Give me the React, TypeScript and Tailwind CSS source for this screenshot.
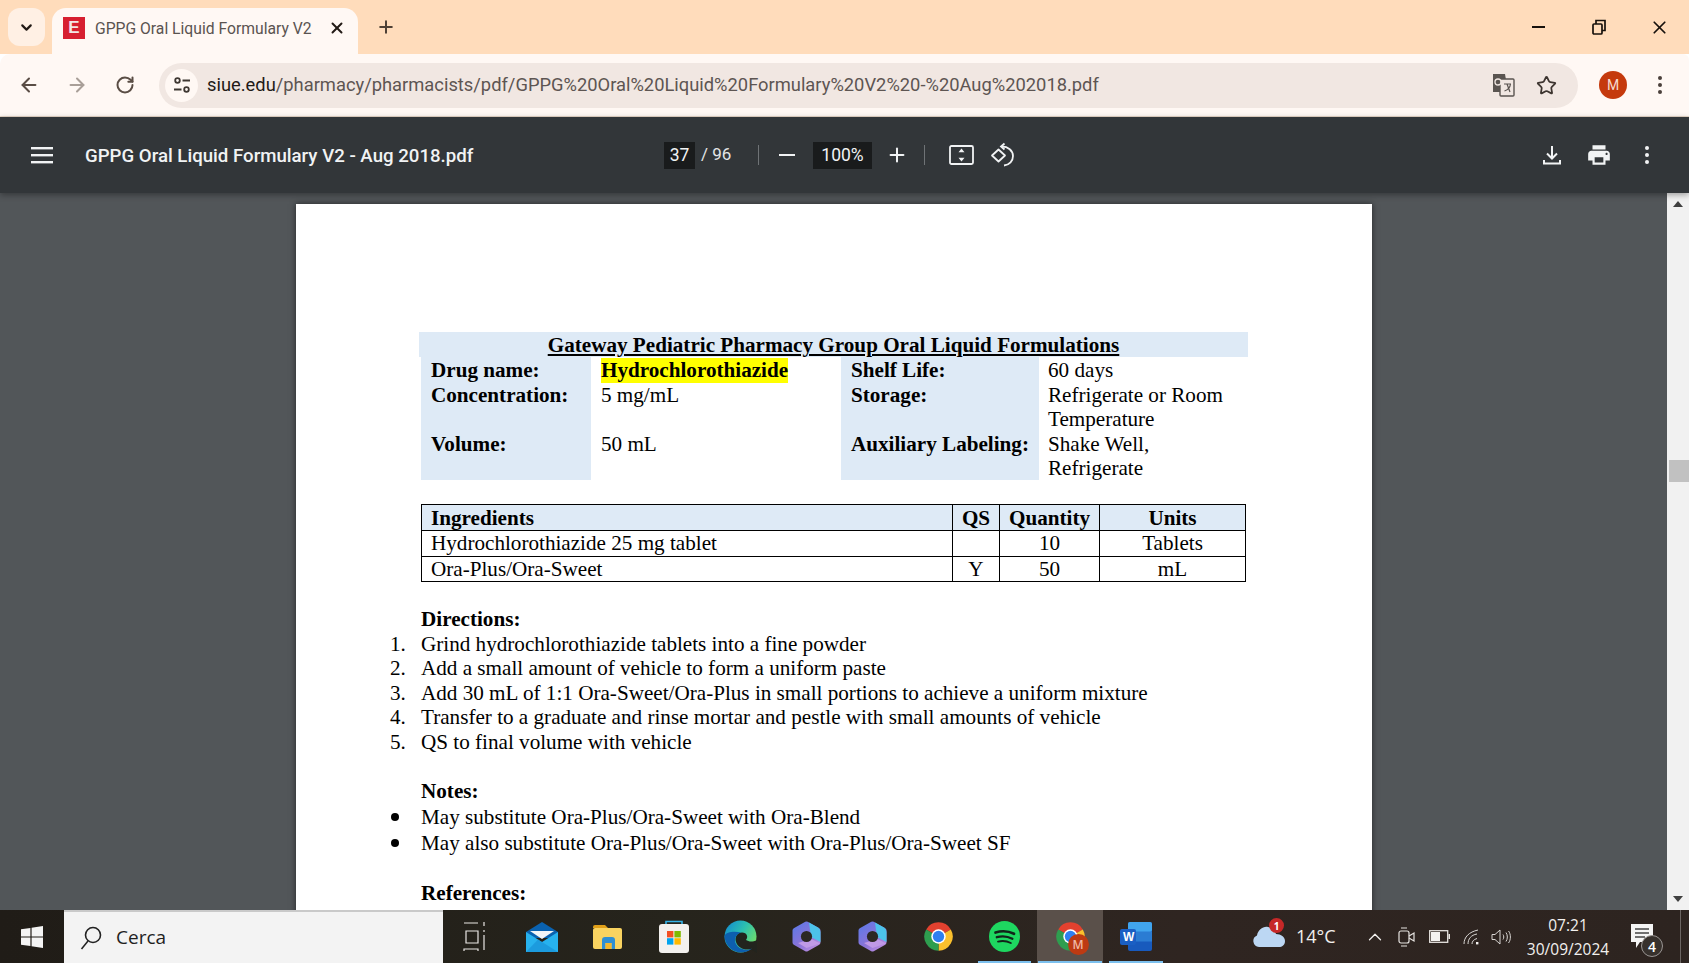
import React from "react";
import { ArrowLeft, ArrowRight, ChevronDown, ChevronUp, Plus, RotateCw, Star, X } from "lucide-react";

function Dots({ color, size = 4 }: { color: string; size?: number }) {
  return (
    <svg width={size + 2} height="24" viewBox="0 0 6 24" fill={color}>
      <circle cx="3" cy="5" r="2" />
      <circle cx="3" cy="12" r="2" />
      <circle cx="3" cy="19" r="2" />
    </svg>
  );
}

function ChromeLogo({ size = 31 }: { size?: number }) {
  return (
    <svg width={size} height={size} viewBox="0 0 24 24">
      <path d="M12 12L2.47 6.5A11 11 0 0 1 21.53 6.5Z" fill="#e2412f" />
      <path d="M12 12L21.53 6.5A11 11 0 0 1 12 23Z" fill="#fbc02d" />
      <path d="M12 12L12 23A11 11 0 0 1 2.47 6.5Z" fill="#2e9e4f" />
      <circle cx="12" cy="12" r="5.6" fill="#fff" />
      <circle cx="12" cy="12" r="4.4" fill="#2f7ff0" />
    </svg>
  );
}

function MailIcon() {
  return (
    <svg width="32" height="30" viewBox="0 0 32 30">
      <path d="M0 10L16 0L32 10V16H0Z" fill="#0a62b0" />
      <path d="M4 9H28L16 17Z" fill="#f3f6f8" />
      <path d="M0 10L16 20L32 10V30H0Z" fill="#27b2ee" />
      <path d="M12 17.5L32 30H0Z" fill="#1a93d8" opacity="0.75" />
    </svg>
  );
}

function FolderIcon() {
  return (
    <svg width="30" height="24" viewBox="0 0 30 24">
      <path d="M0 2A2 2 0 0 1 2 0H12L15 3H0Z" fill="#e09f18" />
      <rect x="0" y="3" width="29" height="21" rx="2" fill="#f9d360" />
      <path d="M9 24V15A3 3 0 0 1 12 12H19A3 3 0 0 1 22 15V24H18.5V18H12.5V24Z" fill="#2e8fd3" />
      <rect x="12.5" y="18" width="6" height="6" fill="#f4b72c" />
    </svg>
  );
}

function StoreIcon() {
  return (
    <svg width="32" height="33" viewBox="0 0 32 33">
      <path d="M8 5V1.5H24V5" fill="none" stroke="#35b3e8" strokeWidth="1.6" />
      <rect x="1" y="4" width="30" height="29" rx="3" fill="#f3f1ee" />
      <rect x="9" y="11" width="6.4" height="6.4" fill="#f25022" />
      <rect x="16.4" y="11" width="6.4" height="6.4" fill="#7fba00" />
      <rect x="9" y="18.2" width="6.4" height="6.4" fill="#00a4ef" />
      <rect x="16.4" y="18.2" width="6.4" height="6.4" fill="#ffb900" />
    </svg>
  );
}

function EdgeIcon() {
  return (
    <svg width="33" height="33" viewBox="0 0 33 33">
      <defs>
        <linearGradient id="edgeTop" x1="0" y1="0" x2="1" y2="0.6">
          <stop offset="0" stopColor="#0f86d6" />
          <stop offset="0.55" stopColor="#2cc0b0" />
          <stop offset="1" stopColor="#6fdc6c" />
        </linearGradient>
      </defs>
      <circle cx="16.5" cy="16.5" r="16" fill="url(#edgeTop)" />
      <path d="M33 20C28 22.5 24.5 21.5 22 20C24.5 17 23 12.5 18 12.5C13 12.5 10.5 17.5 12 22C14 28 21 31 27 29L33 33Z" fill="#22241e" />
      <path d="M0.5 16C1 26 9 32.5 17 32.5C21 32.5 25 31 28 28.5C22 31 15 29.5 12 24C9.5 19 12 14 17 12.5C11 11 2 11.5 0.5 16Z" fill="#0d5fae" />
    </svg>
  );
}

function CopilotIcon({ id }: { id: string }) {
  return (
    <svg width="29" height="31" viewBox="0 0 29 31">
      <defs>
        <linearGradient id={id} x1="0" y1="0" x2="0.8" y2="1">
          <stop offset="0" stopColor="#5f79e6" />
          <stop offset="0.6" stopColor="#8a73d8" />
          <stop offset="1" stopColor="#b68be0" />
        </linearGradient>
      </defs>
      <path d="M14.5 3L26 9.5V21.5L14.5 28L3 21.5V9.5Z" fill={`url(#${id})`} stroke={`url(#${id})`} strokeLinejoin="round" strokeWidth="5" />
      <path d="M17 1.5L26 6.5Q28.5 8 28.5 11V21L19 16Z" fill="#4cc3ea" />
      <path d="M6 22L14.5 27L28 22.5L19.5 18Z" fill="#c09ae6" />
      <circle cx="14.5" cy="15.5" r="5.6" fill="#2c2824" />
    </svg>
  );
}

function SpotifyIcon() {
  return (
    <svg width="31" height="31" viewBox="0 0 31 31">
      <circle cx="15.5" cy="15.5" r="15.5" fill="#1ed760" />
      <g fill="none" stroke="#12241a" strokeLinecap="round">
        <path d="M6.5 11.5C12 9.8 19.5 10 25 12.8" strokeWidth="2.7" />
        <path d="M7.8 16.2C12.5 14.8 18.8 15.3 23.4 17.8" strokeWidth="2.3" />
        <path d="M9 20.6C13 19.6 18 20 21.8 22" strokeWidth="1.9" />
      </g>
    </svg>
  );
}

function WordIcon() {
  return (
    <svg width="32" height="29" viewBox="0 0 32 29">
      <rect x="8" y="0" width="24" height="29" rx="2" fill="#185abd" />
      <rect x="8" y="0" width="24" height="10" rx="2" fill="#41a5ee" />
      <rect x="8" y="9.5" width="24" height="10" fill="#2b7cd3" />
      <rect x="0" y="7" width="16" height="16" rx="2" fill="#1a5fc4" />
    </svg>
  );
}

function Slot({ w, children, active, line }: { w: string; children: React.ReactNode; active?: boolean; line?: string }) {
  return (
    <div className={`relative flex h-full shrink-0 items-center justify-center ${w} ${active ? "bg-[#5a504a]" : ""}`}>
      {children}
      {line && <div className={`absolute bottom-0 h-[2px] bg-[#7cc0ee] ${line}`} />}
    </div>
  );
}

const serif = "font-['Liberation_Serif',serif] text-[21.15px] leading-[24.6px] text-black";

function Direction({ n, children }: { n: string; children: React.ReactNode }) {
  return (
    <div className="flex">
      <span className="-ml-[31px] w-[31px] shrink-0">{n}</span>
      <span>{children}</span>
    </div>
  );
}

function Bullet({ children }: { children: React.ReactNode }) {
  return (
    <div className="flex items-center pt-[1.4px]">
      <span className="-ml-[31px] flex w-[31px] shrink-0">
        <span className="ml-[1px] h-[8px] w-[8px] rounded-full bg-black" />
      </span>
      <span>{children}</span>
    </div>
  );
}

export default function App() {
  return (
    <div className="flex h-[963px] w-[1689px] flex-col overflow-hidden font-['Roboto',sans-serif]">
      {/* tab strip */}
      <div className="flex h-[54px] shrink-0 bg-[#ffdcbb]">
        <div className="ml-[8px] mt-[8px] flex h-[38px] w-[37px] items-center justify-center rounded-[12px] bg-[#fff0e4]">
          <ChevronDown size={17} strokeWidth={3} className="text-[#221a15]" />
        </div>
        <div className="ml-[7px] mt-[8px] flex h-[46px] w-[306px] items-center rounded-t-[14px] bg-[#fff8f4] pb-[7px]">
          <div className="ml-[11px] flex h-[22px] w-[22px] items-center justify-center bg-[#d71f30] font-['Liberation_Sans',sans-serif] text-[17px] font-bold text-[#f2e6e6]">E</div>
          <span className="ml-[10px] w-[217px] overflow-hidden whitespace-nowrap pt-[2px] text-[15.7px] text-[#5a5350]">GPPG Oral Liquid Formulary V2</span>
          <X size={18} strokeWidth={2.6} className="ml-[16px] text-[#221a15]" />
        </div>
        <div className="ml-[18px] flex h-[54px] items-center">
          <Plus size={20} strokeWidth={2.4} className="text-[#4e4035]" />
        </div>
        <div className="ml-auto flex h-[54px] items-center pr-[19px]">
          <div className="h-[2.5px] w-[13px] bg-[#17110c]" />
          <svg width="16" height="16" viewBox="0 0 16 16" fill="none" stroke="#17110c" strokeWidth="1.7" className="ml-[46px]">
            <rect x="2" y="5" width="9" height="10" rx="1" />
            <path d="M5 5V1.5H14V11.5H11" />
          </svg>
          <X size={21} strokeWidth={2} className="ml-[42px] text-[#17110c]" />
        </div>
      </div>

      {/* address toolbar */}
      <div className="flex h-[62px] shrink-0 items-center rounded-tl-[10px] rounded-tr-[6px] bg-[#fff8f4]">
        <div className="ml-[5px] flex w-[48px] justify-center"><ArrowLeft size={22} strokeWidth={2.2} className="text-[#5a4d45]" /></div>
        <div className="flex w-[48px] justify-center"><ArrowRight size={22} strokeWidth={2.2} className="text-[#a99f98]" /></div>
        <div className="flex w-[48px] justify-center"><RotateCw size={20} strokeWidth={2.4} className="text-[#5a4d45]" /></div>
        <div className="ml-[10px] flex h-[45px] w-[1419px] items-center rounded-full bg-[#f1e7e2]">
          <div className="ml-[6px] flex h-[33px] w-[33px] items-center justify-center rounded-full bg-[#fff8f4]">
            <svg width="18" height="18" viewBox="0 0 18 18" fill="none" stroke="#3f3833" strokeWidth="1.8">
              <circle cx="4.5" cy="4.5" r="2.3" />
              <path d="M9.5 4.5H17M1 13.5H8.5" />
              <circle cx="13.5" cy="13.5" r="2.3" />
            </svg>
          </div>
          <span className="ml-[9px] -mt-[1px] whitespace-nowrap text-[18.33px] text-[#5d5552]">
            <span className="text-[#1f1a17]">siue.edu</span>/pharmacy/pharmacists/pdf/GPPG%20Oral%20Liquid%20Formulary%20V2%20-%20Aug%202018.pdf
          </span>
          <svg width="23" height="24" viewBox="0 0 23 24" className="ml-auto">
            <path d="M1 1H13L16 19H1Z" fill="#5a5450" />
            <rect x="8" y="6" width="14" height="17" rx="1" fill="#f1e7e2" stroke="#5a5450" strokeWidth="1.4" />
            <circle cx="6" cy="9" r="3" fill="none" stroke="#f1e7e2" strokeWidth="1.3" />
            <path d="M12 11H19M15 11L18 19M18.5 11C18 15 15.5 17 12.5 18" fill="none" stroke="#5a5450" strokeWidth="1.2" />
          </svg>
          <Star size={21} strokeWidth={2} className="ml-[21px] mr-[21px] text-[#3d3530]" />
        </div>
        <div className="ml-[21px] flex h-[28px] w-[28px] items-center justify-center rounded-full bg-[#c53a0d] text-[14px] text-[#f6dcd0]">M</div>
        <div className="ml-[30px]"><Dots color="#4a403a" /></div>
      </div>
      <div className="h-px shrink-0 bg-[#e8d8c8]" />

      {/* pdf toolbar */}
      <div className="relative z-10 flex h-[76px] shrink-0 items-center bg-[#323639] text-[#f1f3f4] shadow-[0_2px_6px_rgba(0,0,0,0.35)]">
        <svg width="22" height="18" viewBox="0 0 22 18" fill="#f1f3f4" className="ml-[31px]">
          <rect y="1" width="22" height="2.4" />
          <rect y="8" width="22" height="2.4" />
          <rect y="15" width="22" height="2.4" />
        </svg>
        <div className="ml-[32px] w-[579px] whitespace-nowrap pt-[3px] text-[18.65px] font-medium">GPPG Oral Liquid Formulary V2 - Aug 2018.pdf</div>
        <div className="flex h-[27px] w-[31px] items-center justify-center bg-[#191b1c] text-[17.5px]">37</div>
        <div className="ml-[6px] w-[57px] whitespace-nowrap text-[17px] text-[#e3e5e6]">/ 96</div>
        <div className="h-[20px] w-px bg-[#6f7376]" />
        <div className="ml-[20px] h-[2.5px] w-[16px] bg-[#f1f3f4]" />
        <div className="ml-[18px] flex h-[27px] w-[59px] items-center justify-center bg-[#191b1c] text-[17.5px]">100%</div>
        <Plus size={22} strokeWidth={2.2} className="ml-[14px]" />
        <div className="ml-[16px] h-[20px] w-px bg-[#6f7376]" />
        <svg width="25" height="20" viewBox="0 0 25 20" fill="none" stroke="#f1f3f4" strokeWidth="1.8" className="ml-[24px]">
          <rect x="1" y="1" width="23" height="18" rx="1.5" />
          <path d="M12.5 3.5L9.5 7.2H15.5Z M12.5 16.5L9.5 12.8H15.5Z" fill="#f1f3f4" stroke="none" />
        </svg>
        <svg width="25" height="26" viewBox="0 0 25 26" fill="none" stroke="#f1f3f4" strokeWidth="1.8" className="ml-[16px]">
          <path d="M8.5 7.5L15 13.5L8.5 19.5L2 13.5Z" strokeLinejoin="round" />
          <path d="M12 4.5C18 4.5 23 8.5 23 14C23 19 19.5 23 14 23.5" />
          <path d="M14.5 1.5L11 4.5L14.5 7.5" />
        </svg>
        <svg width="20" height="24" viewBox="0 0 20 24" fill="none" stroke="#f1f3f4" strokeWidth="2" className="ml-[527px]">
          <path d="M10 3V15M5 10.5L10 15.5L15 10.5M2 17V20.5H18V17" />
        </svg>
        <svg width="26" height="26" viewBox="0 0 24 24" fill="#f1f3f4" className="ml-[24px]">
          <path d="M19 8H5c-1.66 0-3 1.34-3 3v6h4v4h12v-4h4v-6c0-1.66-1.34-3-3-3zm-3 11H8v-5h8v5zm3-7c-.55 0-1-.45-1-1s.45-1 1-1 1 .45 1 1-.45 1-1 1zm-1-9H6v4h12V3z" />
        </svg>
        <div className="ml-[32px]"><Dots color="#f1f3f4" /></div>
      </div>

      {/* viewer */}
      <div className="flex min-h-0 flex-1 bg-[#525659]">
        <div className="flex min-w-0 flex-1 justify-center overflow-hidden pt-[11px]">
          <div className="h-[900px] w-[1076px] shrink-0 bg-white pl-[122.5px] pt-[128px] shadow-[0_0_6px_rgba(0,0,0,0.55)]">
            <div className={`w-[830px] ${serif}`}>
              <div className="ml-[1px] flex h-[25px] w-[829px] justify-center bg-[#deeaf6] pt-[1px] font-bold">
                <span className="underline decoration-[2px] underline-offset-[2px]">Gateway Pediatric Pharmacy Group Oral Liquid Formulations</span>
              </div>
              <div className="ml-[3px] grid grid-cols-[170px_250px_198px_1fr]">
                <div className="bg-[#deeaf6] pl-[10px] pt-[1px] font-bold">Drug name:</div>
                <div className="pl-[10px] pt-[1px]"><span className="inline-block bg-[#ffff00] font-bold">Hydrochlorothiazide</span></div>
                <div className="bg-[#deeaf6] pl-[10px] pt-[1px] font-bold">Shelf Life:</div>
                <div className="pl-[9px] pt-[1px]">60 days</div>
                <div className="bg-[#deeaf6] pl-[10px] font-bold">Concentration:</div>
                <div className="pl-[10px]">5 mg/mL</div>
                <div className="bg-[#deeaf6] pl-[10px] font-bold">Storage:</div>
                <div className="pl-[9px]">Refrigerate or Room Temperature</div>
                <div className="bg-[#deeaf6] pl-[10px] font-bold">Volume:</div>
                <div className="pl-[10px]">50 mL</div>
                <div className="whitespace-nowrap bg-[#deeaf6] pl-[10px] font-bold">Auxiliary Labeling:</div>
                <div className="h-[48px] pl-[9px]">Shake Well,<br />Refrigerate</div>
              </div>

              <table className="ml-[3px] mt-[24px] w-[825px] table-fixed border-collapse">
                <colgroup>
                  <col className="w-[531px]" />
                  <col className="w-[47px]" />
                  <col className="w-[100px]" />
                  <col />
                </colgroup>
                <tbody>
                  <tr className="h-[26px] bg-[#deeaf6] font-bold">
                    <td className="border border-black pl-[9px] pt-[1px]">Ingredients</td>
                    <td className="border border-black pt-[1px] text-center">QS</td>
                    <td className="border border-black pt-[1px] text-center">Quantity</td>
                    <td className="border border-black pt-[1px] text-center">Units</td>
                  </tr>
                  <tr className="h-[25px]">
                    <td className="border border-black pl-[9px]">Hydrochlorothiazide 25 mg tablet</td>
                    <td className="border border-black" />
                    <td className="border border-black text-center">10</td>
                    <td className="border border-black text-center">Tablets</td>
                  </tr>
                  <tr className="h-[25px] leading-[22px]">
                    <td className="border border-black pl-[9px]">Ora-Plus/Ora-Sweet</td>
                    <td className="border border-black text-center">Y</td>
                    <td className="border border-black text-center">50</td>
                    <td className="border border-black text-center">mL</td>
                  </tr>
                </tbody>
              </table>

              <div className="ml-[3px] mt-[25px]">
                <div className="font-bold">Directions:</div>
                <Direction n="1.">Grind hydrochlorothiazide tablets into a fine powder</Direction>
                <Direction n="2.">Add a small amount of vehicle to form a uniform paste</Direction>
                <Direction n="3.">Add 30 mL of 1:1 Ora-Sweet/Ora-Plus in small portions to achieve a uniform mixture</Direction>
                <Direction n="4.">Transfer to a graduate and rinse mortar and pestle with small amounts of vehicle</Direction>
                <Direction n="5.">QS to final volume with vehicle</Direction>
                <div className="mt-[24.6px] font-bold">Notes:</div>
                <Bullet>May substitute Ora-Plus/Ora-Sweet with Ora-Blend</Bullet>
                <Bullet>May also substitute Ora-Plus/Ora-Sweet with Ora-Plus/Ora-Sweet SF</Bullet>
                <div className="mt-[25.4px] font-bold">References:</div>
                <Direction n="1.">Allen LV, Erickson MA. Stability of extemporaneously compounded oral liquids</Direction>
              </div>
            </div>
          </div>
        </div>
        <div className="flex w-[22px] shrink-0 flex-col bg-[#f1f1f1]">
          <svg width="10" height="6" viewBox="0 0 10 6" fill="#404040" className="ml-[6px] mt-[8px]"><path d="M5 0L10 6H0Z" /></svg>
          <div className="ml-[2px] mt-[253px] h-[22px] bg-[#c1c1c1]" />
          <svg width="10" height="6" viewBox="0 0 10 6" fill="#404040" className="mb-[8px] ml-[6px] mt-auto"><path d="M5 6L10 0H0Z" /></svg>
        </div>
      </div>

      {/* taskbar */}
      <div className="flex h-[53px] shrink-0 items-center bg-[linear-gradient(90deg,#201c17,#26241c_40%,#2f2521_70%,#2d2420)] font-['Open_Sans',sans-serif] text-[#f2f0ee]">
        <div className="flex w-[64px] shrink-0 justify-center">
          <svg width="22" height="22" viewBox="0 0 22 22" fill="#f4f4f4">
            <path d="M0 3.2L9.4 1.9V10.4H0ZM10.6 1.7L22 0V10.4H10.6ZM0 11.6H9.4V20.1L0 18.8ZM10.6 11.6H22V22L10.6 20.3Z" />
          </svg>
        </div>
        <div className="flex h-full w-[379px] shrink-0 items-center border-t-2 border-[#c9c9c9] bg-[#f3f3f3]">
          <svg width="22" height="24" viewBox="0 0 22 24" fill="none" stroke="#222" strokeWidth="1.6" className="ml-[16px]">
            <circle cx="13" cy="9" r="7.5" />
            <path d="M8 15L1.5 23" />
          </svg>
          <span className="ml-[14px] text-[19px] text-[#1f1f1f]">Cerca</span>
        </div>
        <Slot w="w-[62px]">
          <svg width="22" height="32" viewBox="0 0 22 32" fill="none" stroke="#e9e7e4" strokeWidth="1.2">
            <path d="M1 2H15M1 30V28H15V30M3 10H15V22H3Z M21 1V5M21 9V11M21 14V29" />
          </svg>
        </Slot>
        <div className="w-[4px] shrink-0" />
        <Slot w="w-[66px]"><MailIcon /></Slot>
        <Slot w="w-[66px]"><FolderIcon /></Slot>
        <Slot w="w-[66px]"><StoreIcon /></Slot>
        <Slot w="w-[66px]"><EdgeIcon /></Slot>
        <Slot w="w-[66px]"><CopilotIcon id="cp1" /></Slot>
        <Slot w="w-[66px]"><CopilotIcon id="cp2" /></Slot>
        <Slot w="w-[66px]"><ChromeLogo /></Slot>
        <Slot w="w-[66px]" line="left-[7px] right-[6px]"><SpotifyIcon /></Slot>
        <Slot w="w-[66px]" active line="left-[1px] right-[1px]">
          <div className="relative">
            <ChromeLogo />
            <div className="absolute -bottom-[3px] -right-[3px] flex h-[21px] w-[21px] items-center justify-center rounded-full bg-[#bd3a12] text-[12px] font-semibold text-[#f0b8a4]">M</div>
          </div>
        </Slot>
        <Slot w="w-[66px]" line="left-[6px] right-[6px]">
          <div className="relative">
            <WordIcon />
            <span className="absolute left-[3px] top-[9px] font-['Liberation_Sans',sans-serif] text-[12px] font-bold leading-[12px] text-white">W</span>
          </div>
        </Slot>
        <div className="relative ml-[84px] flex shrink-0 items-center">
          <svg width="32" height="21" viewBox="0 0 32 21">
            <path d="M6 21A6 6 0 0 1 4 9.5C5 4 10 0 15 1C19 1.5 22 4 23 8C28 8 32 11 32 15C32 19 29 21 26 21Z" fill="#bcd7f3" />
          </svg>
          <div className="absolute -top-[5px] left-[16px] flex h-[15px] w-[15px] items-center justify-center rounded-full bg-[#c62828] text-[10px] font-bold leading-none text-white">1</div>
          <span className="ml-[11px] w-[37px] whitespace-nowrap text-[18px]">14°C</span>
        </div>
        <ChevronUp size={22} strokeWidth={1.4} className="ml-[31px] shrink-0" />
        <svg width="17" height="24" viewBox="0 0 17 24" fill="none" stroke="#e6e3e0" strokeWidth="1.2" className="ml-[12px] shrink-0">
          <rect x="1" y="6" width="10" height="12" rx="2" />
          <path d="M11 11L16 8V16L11 13M3 3H9M3 21H9" />
        </svg>
        <svg width="21" height="13" viewBox="0 0 21 13" className="ml-[14px] shrink-0">
          <rect x="0.7" y="0.7" width="18" height="11.6" fill="none" stroke="#e6e3e0" strokeWidth="1.3" />
          <rect x="2" y="2" width="9" height="9" fill="#f4f2f0" />
          <rect x="19.5" y="4" width="1.5" height="5" fill="#e6e3e0" />
        </svg>
        <svg width="16" height="16" viewBox="0 0 16 16" fill="none" stroke="#d9d6d3" strokeWidth="1" className="ml-[13px] shrink-0">
          <path d="M1 15C1 8 6 3 15 1M5 15C5 10 8 6 14 5M9 15C9 12.5 10.5 10.5 14 9.5" />
          <rect x="13" y="13" width="2.4" height="2.4" fill="#f4f2f0" stroke="none" />
        </svg>
        <svg width="20" height="16" viewBox="0 0 20 16" fill="none" stroke="#d9d6d3" strokeWidth="1" className="ml-[12px] shrink-0">
          <path d="M1 5.5H4L9 1V15L4 10.5H1Z" />
          <path d="M12 5.5C13 7 13 9 12 10.5M15 3.5C16.8 6 16.8 10 15 12.5M17.5 2C20 5 20 11 17.5 14" />
        </svg>
        <div className="ml-[5px] flex w-[104px] shrink-0 flex-col items-center text-[15.5px] leading-[24px]">
          <span>07:21</span>
          <span className="whitespace-nowrap">30/09/2024</span>
        </div>
        <div className="relative ml-[11px] shrink-0">
          <svg width="22" height="25" viewBox="0 0 22 25">
            <path d="M0 0H22V18H9L5 24V18H0Z" fill="#f5f5f5" />
            <path d="M4 5H18M4 9H18M4 13H14" stroke="#444" strokeWidth="1.3" />
          </svg>
          <div className="absolute left-[10px] top-[11px] flex h-[22px] w-[22px] items-center justify-center rounded-full border border-[#9a9694] bg-[#37312d] text-[14px] font-semibold text-white">4</div>
        </div>
        <div className="ml-[27px] h-full w-px shrink-0 bg-[#6b6562]" />
      </div>
    </div>
  );
}
